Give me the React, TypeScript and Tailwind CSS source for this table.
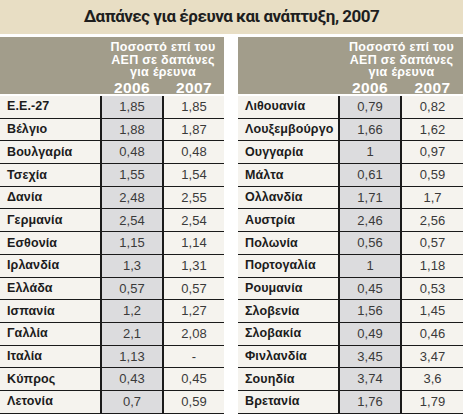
import React from "react";

type Row = [string, string, string];

const left: Row[] = [
  ["Ε.Ε.-27", "1,85", "1,85"],
  ["Βέλγιο", "1,88", "1,87"],
  ["Βουλγαρία", "0,48", "0,48"],
  ["Τσεχία", "1,55", "1,54"],
  ["Δανία", "2,48", "2,55"],
  ["Γερμανία", "2,54", "2,54"],
  ["Εσθονία", "1,15", "1,14"],
  ["Ιρλανδία", "1,3", "1,31"],
  ["Ελλάδα", "0,57", "0,57"],
  ["Ισπανία", "1,2", "1,27"],
  ["Γαλλία", "2,1", "2,08"],
  ["Ιταλία", "1,13", "-"],
  ["Κύπρος", "0,43", "0,45"],
  ["Λετονία", "0,7", "0,59"],
];

const right: Row[] = [
  ["Λιθουανία", "0,79", "0,82"],
  ["Λουξεμβούργο", "1,66", "1,62"],
  ["Ουγγαρία", "1", "0,97"],
  ["Μάλτα", "0,61", "0,59"],
  ["Ολλανδία", "1,71", "1,7"],
  ["Αυστρία", "2,46", "2,56"],
  ["Πολωνία", "0,56", "0,57"],
  ["Πορτογαλία", "1", "1,18"],
  ["Ρουμανία", "0,45", "0,53"],
  ["Σλοβενία", "1,56", "1,45"],
  ["Σλοβακία", "0,49", "0,46"],
  ["Φινλανδία", "3,45", "3,47"],
  ["Σουηδία", "3,74", "3,6"],
  ["Βρετανία", "1,76", "1,79"],
];

function Panel({ rows, lastW }: { rows: Row[]; lastW: string }) {
  return (
    <div className="flex flex-col">
      <div className="h-[57px] bg-[#a29d8b] flex">
        <div className="w-[102px]" />
        <div className="flex-1 flex flex-col items-center text-white font-bold pt-[4px]">
          <div className="text-[12.5px] leading-[12.6px] tracking-[0.3px] text-center">
            <div>Ποσοστό επί του</div>
            <div>ΑΕΠ σε δαπάνες</div>
            <div>για έρευνα</div>
          </div>
          <div className="flex w-full text-[15.5px] leading-[16px] tracking-[0.4px] mt-[1px]">
            <div className="w-[60px] text-center">2006</div>
            <div className="w-[2px]" />
            <div className="flex-1 text-center">2007</div>
          </div>
        </div>
      </div>
      <div className="mt-[2px] flex flex-col">
        {rows.map((r, i) => (
          <div key={i} className="flex h-[22.7px] border-b border-[#1a1a1a] bg-[#f5f3ee]">
            <div className="w-[100px] pl-[7px] flex items-center font-bold text-[12.5px] text-[#1c1c1c] tracking-[0.1px]">
              {r[0]}
            </div>
            <div className="w-[64px] border-x-2 border-[#1a1a1a] bg-[#dcdcde] flex items-center justify-center text-[13px] text-[#3a3a3a]">
              {r[1]}
            </div>
            <div className={`${lastW} flex items-center justify-center text-[13px] text-[#3a3a3a]`}>
              {r[2]}
            </div>
          </div>
        ))}
      </div>
    </div>
  );
}

export default function App() {
  return (
    <div
      className="w-[463px] h-[415px] bg-white overflow-hidden"
      style={{ fontFamily: '"Liberation Sans", Arial, sans-serif' }}
    >
      <div className="h-[34px] bg-[#e8dec4] flex items-center justify-center">
        <span
          className="text-[17px] font-bold text-[#1e1e1e] tracking-[-0.5px]"
          style={{ fontFamily: '"Roboto", "Liberation Sans", sans-serif' }}
        >
          Δαπάνες για έρευνα και ανάπτυξη, 2007
        </span>
      </div>
      <div className="mt-[3px] flex">
        <div className="w-[224px]">
          <Panel rows={left} lastW="w-[60px]" />
        </div>
        <div className="w-[14px]" />
        <div className="w-[225px]">
          <Panel rows={right} lastW="w-[61px]" />
        </div>
      </div>
    </div>
  );
}
